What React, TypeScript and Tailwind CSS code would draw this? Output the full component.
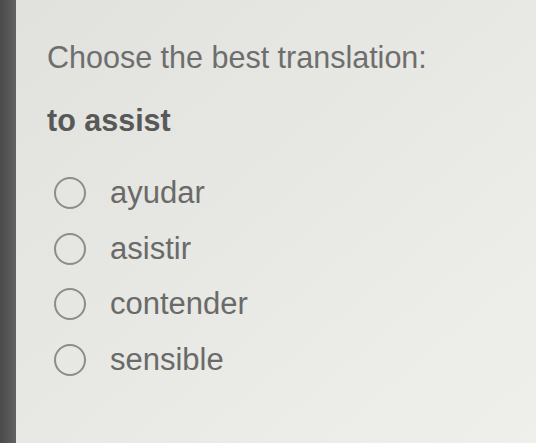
const options = ["ayudar", "asistir", "contender", "sensible"];

export default function App() {
  return (
    <div className="flex h-[443px] w-[536px] overflow-hidden bg-[#e6e6e2] font-['Liberation_Sans',Arial,sans-serif]">
      {/* dark edge of the device on the left */}
      <div className="w-[16px] shrink-0 bg-gradient-to-r from-[#4a4a4a] to-[#626262]" />
      <div className="flex-1 bg-gradient-to-br from-[#e1e1dd] via-[#e8e8e4] to-[#efefeb] pl-[31px] pt-[39px]">
        <div className="text-[30.5px] leading-[36px] text-[#6e6e6e]">Choose the best translation:</div>
        <div className="mt-[27px] text-[30.5px] font-bold leading-[36px] text-[#585858]">to assist</div>
        <div className="mt-[27px] flex flex-col">
          {options.map((opt) => (
            <div key={opt} className="flex h-[55.7px] items-center">
              <div className="ml-[7px] h-[32px] w-[32px] rounded-full border-[2.5px] border-[#8c8c8a]" />
              <span className="ml-[24px] text-[31px] leading-[36px] text-[#6a6a6a]">{opt}</span>
            </div>
          ))}
        </div>
      </div>
    </div>
  );
}
